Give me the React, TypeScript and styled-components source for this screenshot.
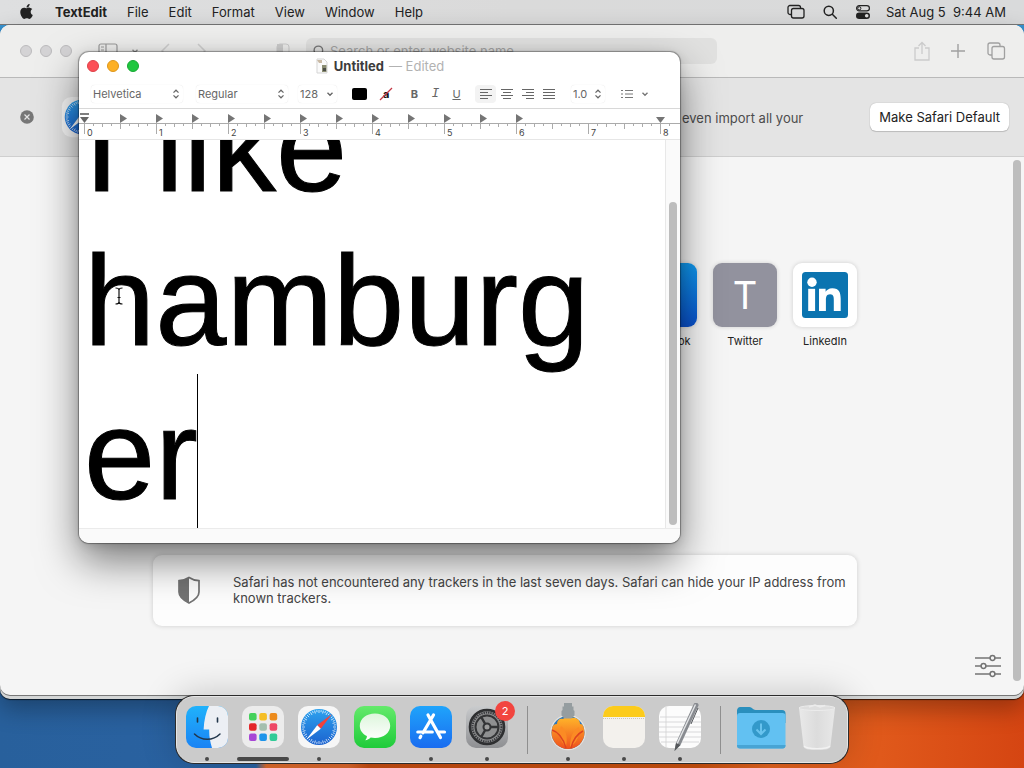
import React from "react";
import styled, { createGlobalStyle } from "styled-components";
import { FaApple } from "react-icons/fa";

const GlobalStyle = createGlobalStyle`
  *, *::before, *::after { box-sizing: border-box; }
  body {
    margin: 0;
    font-family: Inter, "Liberation Sans", sans-serif;
    font-size: 13px;
    line-height: 16px;
    color: #222;
  }
  button, input, select, textarea { font: inherit; color: inherit; }
  svg { display: block; flex: none; }
`;

/* ---------- Desktop ---------- */

const Desktop = styled.div`
  position: relative;
  min-height: 100vh;
  overflow: hidden;
  background:
    linear-gradient(180deg, #45a4e2 0, #1d6fae 80px, transparent 120px),
    linear-gradient(90deg, #28609c 0, #2a62a2 25%, #dd6a2c 26%, #d9662c 34%, #c44c12 36%, #c8500f 68%, #e2631f 75%, #e0591b 86%, #d54512 100%);
`;

const MenuBar = styled.header`
  display: flex;
  align-items: center;
  justify-content: space-between;
  height: 25px;
  padding: 0 18px 1px 18px;
  background: linear-gradient(90deg, #dedfe0, #dadada 50%, #d9dadb);
  border-bottom: 1px solid #777;
`;

const MenuGroup = styled.nav<{ $gap: number }>`
  display: flex;
  align-items: center;
  gap: ${(p) => p.$gap}px;
`;

const MenuItem = styled.button<{ $bold?: boolean }>`
  padding: 0;
  border: 0;
  background: none;
  white-space: pre;
  font-weight: ${(p) => (p.$bold ? 700 : 400)};
`;

const IconButton = styled.button<{ $color?: string }>`
  display: flex;
  align-items: center;
  justify-content: center;
  padding: 0;
  border: 0;
  background: none;
  color: ${(p) => p.$color ?? "#222"};
`;

/* ---------- Safari ---------- */

const BackWindow = styled.div`
  position: absolute;
  inset: 25px 0 69px 0;
  border-radius: 10px;
  background: #d3d5d5;
  box-shadow: 0 1px 1px rgba(0, 0, 0, 0.7), 0 10px 24px rgba(0, 0, 0, 0.3);
`;

const SafariWindow = styled.section`
  position: absolute;
  inset: 25px 0 73px 0;
  display: flex;
  flex-direction: column;
  overflow: hidden;
  border-radius: 10px;
  background: #f5f5f5;
  box-shadow: 0 1px 0 #777;
`;

const SafariToolbar = styled.div`
  display: flex;
  align-items: center;
  height: 53px;
  padding: 0 18px 0 20px;
  background: #eeeeed;
  border-bottom: 1px solid #b9b9b9;
`;

const Lights = styled.div`
  display: flex;
  gap: 8px;
`;

const Light = styled.button<{ $fill: string; $edge: string }>`
  width: 12px;
  height: 12px;
  padding: 0;
  border: 1px solid ${(p) => p.$edge};
  border-radius: 50%;
  background: ${(p) => p.$fill};
`;

const NavIcons = styled.div`
  display: flex;
  align-items: center;
  flex: none;
  width: 204px;
  padding-left: 26px;
  gap: 13px;
`;

const SearchField = styled.label`
  display: flex;
  align-items: center;
  flex: 1;
  gap: 4px;
  height: 26px;
  margin: 0 197px 0 16px;
  padding: 0 7px;
  border-radius: 6px;
  background: #e1e1e0;
  color: #777;
`;

const SearchInput = styled.input`
  flex: 1;
  min-width: 0;
  padding: 0;
  border: 0;
  background: none;
  outline: none;
  &::placeholder { color: #a3a3a3; opacity: 1; }
`;

const ToolbarRight = styled.div`
  display: flex;
  align-items: center;
  gap: 20px;
`;

const Banner = styled.div`
  display: flex;
  align-items: center;
  height: 79px;
  padding: 0 15px 0 20px;
  background: #e4e4e4;
  border-bottom: 1px solid #cfcfcf;
`;

const BannerIcon = styled.div`
  margin-left: 25px;
`;

const BannerText = styled.p`
  flex: 1;
  margin: 0 67px 0 0;
  padding-top: 2px;
  text-align: right;
  color: #4c4c4c;
`;

const DefaultButton = styled.button`
  height: 28px;
  padding: 0 9px;
  border: 0;
  border-radius: 6px;
  background: #fff;
  box-shadow: 0 0 1px rgba(0, 0, 0, 0.35), 0 1px 1px rgba(0, 0, 0, 0.15);
`;

const StartPage = styled.div`
  flex: 1;
  display: flex;
  justify-content: space-between;
  gap: 3px;
  padding: 3px 3px 14px 0;
`;

const StartScroll = styled.main`
  flex: 1;
  display: flex;
  flex-direction: column;
  align-items: center;
  justify-content: space-between;
  padding: 103px 0 0 0;
`;

const StartColumn = styled.div`
  width: 70%;
  max-width: 704px;
  min-width: 600px;
`;

const Favorites = styled.div`
  display: flex;
  justify-content: flex-end;
  gap: 16px;
`;

const Favorite = styled.a`
  display: flex;
  flex-direction: column;
  align-items: center;
  gap: 6px;
  width: 64px;
  font-size: 11px;
  color: #222;
  text-decoration: none;
`;

const Tile = styled.span<{ $bg: string }>`
  display: flex;
  align-items: center;
  justify-content: center;
  width: 64px;
  height: 64px;
  border-radius: 9px;
  background: ${(p) => p.$bg};
  color: #fff;
  font-size: 38px;
  line-height: 64px;
  font-weight: 400;
  box-shadow: 0 0 4px rgba(0, 0, 0, 0.16);
`;

const PrivacyCard = styled.div`
  display: flex;
  align-items: center;
  gap: 30px;
  min-height: 71px;
  margin-top: 206px;
  padding: 0 4px 2px 22px;
  border-radius: 9px;
  background: #fdfdfd;
  box-shadow: 0 0 5px rgba(0, 0, 0, 0.16);
  color: #444;
`;

const PrivacyText = styled.p`
  margin: 0;
`;

const SettingsRow = styled.div`
  align-self: flex-end;
  padding: 0 9px 3px 0;
`;

const ScrollThumb = styled.div<{ $h?: number }>`
  width: 8px;
  border-radius: 4px;
  background: #bdbdbd;
  height: ${(p) => (p.$h ? `${p.$h}%` : "auto")};
`;

/* ---------- TextEdit ---------- */

const EditorWindow = styled.section`
  position: absolute;
  top: 52px;
  left: 79px;
  width: 601px;
  height: 491px;
  display: flex;
  flex-direction: column;
  overflow: hidden;
  border-radius: 10px;
  background: #fff;
  box-shadow: 0 0 1px 1px rgba(0, 0, 0, 0.34), 0 18px 40px rgba(0, 0, 0, 0.5), 0 2px 12px rgba(0, 0, 0, 0.12);
`;

const TitleBar = styled.div`
  display: grid;
  grid-template-columns: 1fr auto 1fr;
  align-items: center;
  height: 28px;
  padding: 0 8px;
`;

const Title = styled.h1`
  display: flex;
  align-items: center;
  gap: 5px;
  margin: 0;
  font-size: 13px;
  font-weight: 700;
  color: #3c3c3c;
`;

const Edited = styled.span`
  font-weight: 400;
  color: #b2b2b2;
`;

const FormatBar = styled.div`
  display: flex;
  align-items: center;
  height: 29px;
  padding: 0 12px 1px 12px;
  border-bottom: 1px solid #d8d8d8;
  font-size: 11px;
  color: #666;
`;

const SelectBox = styled.label<{ $width: number; $gap: number }>`
  display: flex;
  align-items: center;
  width: ${(p) => p.$width}px;
  height: 18px;
  margin-right: ${(p) => p.$gap}px;
  padding: 0 3px 0 2px;
  border-radius: 4px;
  box-shadow: 0 0 1px rgba(0, 0, 0, 0.15);
`;

const Select = styled.select`
  flex: 1;
  min-width: 0;
  padding: 0;
  border: 0;
  appearance: none;
  background: none;
  outline: none;
`;

const Swatch = styled.button`
  width: 15px;
  height: 12px;
  margin-right: 12px;
  padding: 0;
  border: 0;
  border-radius: 2px;
  background: #000;
`;

const FormatGroup = styled.div<{ $right: number }>`
  display: flex;
  align-items: center;
  margin-right: ${(p) => p.$right}px;
`;

const FormatButton = styled.button<{ $active?: boolean; $kind?: "b" | "i" | "u" }>`
  display: flex;
  align-items: center;
  justify-content: center;
  width: 21px;
  height: 18px;
  padding: 0;
  border: 0;
  border-radius: 4px;
  background: ${(p) => (p.$active ? "#f3f3f3" : "none")};
  font-weight: ${(p) => (p.$kind === "b" ? 700 : 400)};
  font-style: ${(p) => (p.$kind === "i" ? "italic" : "normal")};
  font-family: ${(p) => (p.$kind === "i" ? '"Liberation Mono", monospace' : "inherit")};
  font-size: ${(p) => (p.$kind === "i" ? 13 : 11)}px;
  text-decoration: ${(p) => (p.$kind === "u" ? "underline" : "none")};
`;

const Ruler = styled.svg`
  width: 100%;
  height: 31px;
  border-bottom: 1px solid #e6e6e6;
  font-size: 9px;
`;

const EditorBody = styled.div`
  flex: 1;
  display: flex;
  min-height: 0;
`;

const Page = styled.div`
  position: relative;
  flex: 1;
  display: flex;
  align-items: flex-end;
  overflow: hidden;
`;

const Document = styled.textarea`
  display: block;
  flex: 1;
  margin: 0 0 -4px;
  padding: 0 10px 0 5px;
  border: 0;
  outline: none;
  resize: none;
  overflow: hidden;
  background: none;
  font-family: "Liberation Sans", Arial, sans-serif;
  font-size: 128px;
  line-height: 154px;
  color: #000;
  -webkit-text-stroke: 1px #000;
`;

const Caret = styled.span`
  position: absolute;
  left: 118px;
  bottom: 0;
  width: 1px;
  height: 154px;
  background: #000;
`;

const ScrollTrack = styled.div`
  display: flex;
  align-items: flex-end;
  justify-content: center;
  width: 15px;
  padding-bottom: 3px;
  border-left: 1px solid #e8e8e8;
  background: #fafafa;
`;

const EditorFooter = styled.div`
  height: 15px;
  border-top: 1px solid #ebebeb;
  background: #fafafa;
`;

const Pointer = styled.svg`
  position: absolute;
  left: 114px;
  top: 287px;
`;

/* ---------- Dock ---------- */

const DockBar = styled.nav`
  position: absolute;
  bottom: 5px;
  left: 50%;
  transform: translateX(-50%);
  display: flex;
  align-items: center;
  height: 67px;
  padding: 0 2px;
  border: 1px solid #e6e6e6;
  border-radius: 18px;
  background: #cbcbcb;
  box-shadow: 0 0 0 1px #2c2c2c, 0 -2px 36px rgba(0, 0, 0, 0.2);
`;

const DockItem = styled.button`
  position: relative;
  display: flex;
  flex-direction: column;
  align-items: center;
  width: 56px;
  height: 65px;
  padding: 6px 0 0;
  border: 0;
  background: none;
`;

const Dot = styled.span<{ $wide?: boolean }>`
  width: ${(p) => (p.$wide ? 52 : 4)}px;
  height: 4px;
  margin-top: 6px;
  border-radius: 2px;
  background: #484848;
`;

const Badge = styled.span`
  position: absolute;
  top: 4px;
  right: 0;
  width: 20px;
  height: 20px;
  border-radius: 50%;
  background: #f2453f;
  color: #fff;
  font-size: 11px;
  line-height: 20px;
`;

const DockSeparator = styled.span`
  width: 1px;
  height: 48px;
  margin: 0 12px;
  background: #8f8f8f;
`;

/* ---------- Drawings ---------- */

const UpDown = () => (
  <svg width="8" height="10" viewBox="0 0 8 10" fill="none" stroke="currentColor" strokeWidth="1.2">
    <path d="M1.5 3.6 4 1.2l2.5 2.4M1.5 6.4 4 8.8l2.5-2.4" />
  </svg>
);

const Chevron = () => (
  <svg width="8" height="8" viewBox="0 0 8 8" fill="none" stroke="currentColor" strokeWidth="1.4">
    <path d="M1.5 2.8 4 5.2l2.5-2.4" />
  </svg>
);

const Magnifier = ({ size = 14 }: { size?: number }) => (
  <svg width={size} height={size} viewBox="0 0 14 14" fill="none" stroke="currentColor" strokeWidth="1.5" strokeLinecap="round">
    <circle cx="5.8" cy="5.8" r="4.6" />
    <path d="m9.3 9.3 4 4" />
  </svg>
);

const AlignIcon = ({ rows }: { rows: [number, number][] }) => (
  <svg width="12" height="10" viewBox="0 0 12 10" stroke="currentColor" strokeWidth="1">
    {rows.map(([a, b], i) => (
      <path key={i} d={`M${a} ${i * 3 + 0.5}H${b}`} />
    ))}
  </svg>
);

const LinkedInMark = () => (
  <svg width="46" height="46" viewBox="0 0 46 46">
    <rect width="46" height="46" rx="3.500" fill="#0b74b0" />
    <g fill="#fff">
      <circle cx="10" cy="10.200" r="4.700" />
      <path d="M6.200 16.800h6.900V39H6.200z" />
      <path d="M17 16.800h6.600v3c1-1.800 3.200-3.600 6.700-3.600 7 0 8.400 4.600 8.400 10.600V39h-6.900V28.200c0-2.700 0-6-3.700-6s-4.200 2.900-4.200 5.900V39H17z" />
    </g>
  </svg>
);

const compassTicks = Array.from({ length: 48 }, (_, i) => i * 7.5);

const Compass = ({ size = 48 }: { size?: number }) => (
  <svg width={size} height={size} viewBox="0 0 48 48">
    <defs>
      <linearGradient id="compass" x1="0" y1="0" x2="0" y2="1">
        <stop offset="0" stopColor="#2da2ee" />
        <stop offset="1" stopColor="#1b62cf" />
      </linearGradient>
    </defs>
    <rect x="3" y="3" width="42" height="42" rx="10" fill="#f6f6f6" />
    <circle cx="24" cy="24" r="18" fill="url(#compass)" />
    {compassTicks.map((a, i) => (
      <path key={a} d={i % 2 ? "M24 7v2" : "M24 7v3"} stroke="#fff" strokeWidth=".7" transform={`rotate(${a} 24 24)`} />
    ))}
    <path d="M37 11 22.2 22.2l3.6 3.6z" fill="#f2413b" />
    <path d="M11 37 22.2 22.2l3.6 3.6z" fill="#fff" />
  </svg>
);

const Finder = () => (
  <svg width="48" height="48" viewBox="0 0 48 48">
    <defs>
      <linearGradient id="finder" x1="0" y1="0" x2="0" y2="1">
        <stop offset="0" stopColor="#20b2fb" />
        <stop offset="1" stopColor="#1a83f4" />
      </linearGradient>
      <clipPath id="finderClip"><rect x="3" y="3" width="42" height="42" rx="10" /></clipPath>
    </defs>
    <g clipPath="url(#finderClip)">
      <rect x="3" y="3" width="42" height="42" fill="url(#finder)" />
      <path d="M26 3c-3 6-5 14-5.400 23.500h5.600c-.2 6 .8 12 2.800 18.500h17V3z" fill="#eceff4" />
    </g>
    <path d="M14.500 15v4M34.500 15v4" stroke="#22364b" strokeWidth="1.600" strokeLinecap="round" />
    <path d="M11.500 31c7 7 18.500 7 25.500 0" fill="none" stroke="#22364b" strokeWidth="1.500" strokeLinecap="round" />
  </svg>
);

const padColors = ["#45d15b", "#f5be25", "#ec8b1c", "#e3262a", "#a3bfae", "#ee4766", "#a746d6", "#1d94ea", "#31cb97"];

const Launchpad = () => (
  <svg width="48" height="48" viewBox="0 0 48 48">
    <rect x="3" y="3" width="42" height="42" rx="10" fill="#ececec" />
    {padColors.map((c, i) => (
      <rect key={c} x={10 + (i % 3) * 10.300} y={10 + Math.floor(i / 3) * 10.200} width="7.600" height="7.600" rx="2" fill={c} />
    ))}
  </svg>
);

const Messages = () => (
  <svg width="48" height="48" viewBox="0 0 48 48">
    <defs>
      <linearGradient id="msg" x1="0" y1="0" x2="0" y2="1">
        <stop offset="0" stopColor="#64ea6b" />
        <stop offset="1" stopColor="#1fcb3a" />
      </linearGradient>
      <linearGradient id="bubble" x1="0" y1="0" x2="0" y2="1">
        <stop offset="0" stopColor="#ddf6dc" />
        <stop offset="1" stopColor="#fff" />
      </linearGradient>
    </defs>
    <rect x="3" y="3" width="42" height="42" rx="10" fill="url(#msg)" />
    <path d="M24 10.500c8.700 0 15.200 5.400 15.200 12.200S32.700 35 24 35c-1.500 0-3-.2-4.300-.5-1.300 1.500-3.300 2.600-5.500 2.700 1.200-1.200 1.700-2.500 1.700-4.100-4.400-2.200-7.100-6-7.100-10.400 0-6.800 6.500-12.200 15.200-12.200z" fill="url(#bubble)" />
  </svg>
);

const AppStore = () => (
  <svg width="48" height="48" viewBox="0 0 48 48">
    <defs>
      <linearGradient id="store" x1="0" y1="0" x2="0" y2="1">
        <stop offset="0" stopColor="#1fa4fb" />
        <stop offset="1" stopColor="#1a6cf0" />
      </linearGradient>
    </defs>
    <rect x="3" y="3" width="42" height="42" rx="10" fill="url(#store)" />
    <g stroke="#fff" strokeWidth="3.200" strokeLinecap="round" fill="none">
      <path d="m21 12 12.500 22.500M26.500 12 16 29.800M13.800 33.200l-.8 1.500M10.800 29h14.500M31.500 29h6" />
    </g>
  </svg>
);

const Settings = () => (
  <svg width="48" height="48" viewBox="0 0 48 48">
    <defs>
      <linearGradient id="set" x1="0" y1="0" x2="0" y2="1">
        <stop offset="0" stopColor="#c9cbcd" />
        <stop offset="1" stopColor="#8e8f92" />
      </linearGradient>
    </defs>
    <rect x="3" y="3" width="42" height="42" rx="10" fill="url(#set)" />
    <circle cx="24" cy="24" r="17" fill="#8b8c8d" stroke="#2e2f31" strokeWidth="2.600" />
    <circle cx="24" cy="24" r="14.500" fill="none" stroke="#35363a" strokeWidth="2" strokeDasharray="1.300 1" />
    <circle cx="24" cy="24" r="11.500" fill="#8f9091" stroke="#333436" strokeWidth="2" />
    <circle cx="24" cy="24" r="3.500" fill="#9c9c9c" stroke="#333436" strokeWidth="2" />
    <path d="M27.500 24H36M22.200 21 18 13.700M22.200 27 18 34.300" stroke="#333436" strokeWidth="2.400" />
  </svg>
);

const Installer = () => (
  <svg width="48" height="48" viewBox="0 0 48 48">
    <defs>
      <clipPath id="orb"><circle cx="24" cy="29.500" r="16.500" /></clipPath>
      <linearGradient id="petal" x1="0" y1="0" x2="0" y2="1">
        <stop offset="0" stopColor="#ffb52a" />
        <stop offset="1" stopColor="#ee4a1c" />
      </linearGradient>
    </defs>
    <circle cx="24" cy="29.500" r="17.800" fill="#e6e4e0" />
    <g clipPath="url(#orb)">
      <rect x="6" y="12" width="36" height="36" fill="#2f78b8" />
      <path d="M6 27c2-4 4-6 7-6 0-4 3-6 6-5 2-2 6-2 9-1 5-1 8 2 8 6 3 0 5 2 6 6l-3 14-15 7-15-7z" fill="url(#petal)" />
      <path d="M22 44c-6-6-8-13-5-21 5 4 7 10 5 21zM26 44c7-4 10-12 9-20-6 3-9 10-9 20z" fill="#fb8b24" />
      <path d="M8 27c7 2 11 8 14 18M39 28c-6 3-10 9-12 17" stroke="#dd4420" strokeWidth="1.500" fill="none" />
    </g>
    <path d="M20 0h8v3.500h1.500v3.500l1 1v4.500l-3 3h-7l-3-3V8l1-1V3.500H20z" fill="#959da0" />
  </svg>
);

const Notes = () => (
  <svg width="48" height="48" viewBox="0 0 48 48">
    <defs><clipPath id="notes"><rect x="3" y="3" width="42" height="42" rx="10" /></clipPath></defs>
    <g clipPath="url(#notes)">
      <rect x="3" y="3" width="42" height="42" fill="#f3f1ed" />
      <rect x="3" y="3" width="42" height="11" fill="#fccb1b" />
      <path d="M3 15.500h42" stroke="#c9c5bb" strokeWidth="1" strokeDasharray="1 1" />
    </g>
  </svg>
);

const TextEditIcon = () => (
  <svg width="48" height="48" viewBox="0 0 48 48">
    <rect x="3" y="3" width="42" height="42" rx="10" fill="#fcfcfc" />
    <path d="M4 14h40M3 19h42M3 24h42M3 29h42M3 34h42M5 39h38" stroke="#cfcfd2" strokeWidth=".8" />
    <path d="M10 4v40" stroke="#d2d2d2" strokeWidth=".8" />
    <path d="M18.500 48 20 40 38 .5c1.500-1.500 5-.5 4.500 2L24.500 42z" fill="#888b90" />
    <path d="M21 41 39.500 1.500" stroke="#e3e5e7" strokeWidth="1.400" />
    <path d="m18.500 48 1.500-8 4.500 2z" fill="#55585c" />
    <path d="M42 5 35 21" stroke="#55585c" strokeWidth="1" />
  </svg>
);

const Folder = () => (
  <svg width="52" height="48" viewBox="0 0 52 48">
    <path d="M2 8c0-2 1-4 3.500-4h9c2.500 0 3.500 3 6 3H47c2.500 0 3.500 1.500 3.500 3.500V20H2z" fill="#2a8fbd" />
    <rect x="2" y="10" width="48.500" height="35.500" rx="3" fill="#62c1f2" />
    <path d="M2 42h48.500v.500a3 3 0 0 1-3 3H5a3 3 0 0 1-3-3z" fill="#48a4d4" />
    <circle cx="26" cy="26" r="9" fill="#3399ca" />
    <path d="M26 20.500v10M21.500 26.500l4.500 4.500 4.500-4.500" fill="none" stroke="#69c3ee" strokeWidth="2" />
  </svg>
);

const Trash = () => (
  <svg width="48" height="48" viewBox="0 0 48 48">
    <defs>
      <linearGradient id="trash" x1="0" y1="0" x2="1" y2="0">
        <stop offset="0" stopColor="#e9e9e9" />
        <stop offset=".5" stopColor="#dcdcdc" />
        <stop offset="1" stopColor="#e8e8e8" />
      </linearGradient>
    </defs>
    <path d="M6 5h36l-4.500 38c-.5 3-4 4-13.500 4s-13-1-13.500-4z" fill="url(#trash)" />
    <ellipse cx="24" cy="5" rx="18" ry="2.500" fill="#dedede" stroke="#ececec" />
    <path d="M16 4 22 2l5 2 5-1.500" stroke="#ececec" strokeWidth="1.500" fill="none" />
    <path d="M11 43c3 3.500 23 3.500 26 0" stroke="#f2f2f2" strokeWidth="1.200" fill="none" />
  </svg>
);

const tabStops = Array.from({ length: 12 }, (_, i) => 42 + i * 36);
const rulerTicks = Array.from({ length: 66 }, (_, i) => i);

const RulerDrawing = () => (
  <Ruler aria-label="Ruler">
    <path d="M0 14.500H2000" stroke="#ababab" />
    {rulerTicks.map((i) => (
      <path key={i} d={`M${5.5 + i * 9} 15v${i % 8 === 0 ? 10 : i % 4 === 0 ? 5 : i % 2 === 0 ? 3 : 2}`} stroke="#ababab" />
    ))}
    {Array.from({ length: 9 }, (_, i) => (
      <text key={i} x={8 + i * 72} y="27" fill="#444">{i}</text>
    ))}
    {tabStops.map((x) => (
      <path key={x} d={`M${x - 1} 5l7 4.500-7 4.500z`} fill="#757575" />
    ))}
    <path d="M1 5h9" stroke="#555" strokeWidth="1.500" />
    <path d="M1 8h9l-4.500 6z" fill="#666" />
    <path d="M577 8h9l-4.500 6z" fill="#757575" />
  </Ruler>
);

const menus = ["File", "Edit", "Format", "View", "Window", "Help"];

export default function App() {
  return (
    <>
      <GlobalStyle />
      <Desktop>
        <MenuBar>
          <MenuGroup $gap={20}>
            <IconButton aria-label="Apple menu"><FaApple size={17} /></IconButton>
            <MenuItem $bold>TextEdit</MenuItem>
            {menus.map((m) => <MenuItem key={m}>{m}</MenuItem>)}
          </MenuGroup>
          <MenuGroup $gap={15}>
            <MenuGroup $gap={18}>
              <IconButton aria-label="Stage Manager">
                <svg width="18" height="16" viewBox="0 0 18 16" fill="none" stroke="currentColor" strokeWidth="1.300">
                  <path d="M4.500 10.500H3a2 2 0 0 1-2-2V3.500a2 2 0 0 1 2-2h8.500a2 2 0 0 1 2 2v1" />
                  <rect x="4.500" y="4.500" width="12.500" height="9.500" rx="2" />
                </svg>
              </IconButton>
              <IconButton aria-label="Spotlight"><Magnifier /></IconButton>
              <IconButton aria-label="Control Center">
                <svg width="16" height="14" viewBox="0 0 16 14">
                  <rect x="1.600" y=".7" width="12.800" height="5.200" rx="2.600" fill="none" stroke="#222" strokeWidth="1.200" />
                  <circle cx="4.300" cy="3.300" r="1.600" fill="none" stroke="#222" />
                  <rect x="1" y="7.500" width="14" height="6.400" rx="3.200" fill="#222" />
                  <circle cx="11.700" cy="10.700" r="1.800" fill="#ddd" />
                </svg>
              </IconButton>
            </MenuGroup>
            <MenuItem>{"Sat Aug 5  9:44 AM"}</MenuItem>
          </MenuGroup>
        </MenuBar>

        <BackWindow />
        <SafariWindow aria-label="Safari">
          <SafariToolbar>
            <Lights>
              {["Close", "Minimize", "Zoom"].map((l) => <Light key={l} aria-label={l} $fill="#d4d3d5" $edge="#bcbbbd" />)}
            </Lights>
            <NavIcons>
              <IconButton aria-label="Sidebar" $color="#9a9a9a">
                <svg width="20" height="16" viewBox="0 0 20 16" fill="none" stroke="currentColor" strokeWidth="1.200">
                  <rect x="1" y="1" width="18" height="14" rx="2" />
                  <path d="M8 1v14M3 4h3M3 7h3M3 10h3" />
                </svg>
              </IconButton>
              <IconButton aria-label="Tab groups" $color="#8c8c8c"><Chevron /></IconButton>
              <IconButton aria-label="Back" $color="#cfcfcf">
                <svg width="24" height="16" viewBox="0 0 24 16" fill="none" stroke="currentColor" strokeWidth="1.500"><path d="m17 1-7 7 7 7" /></svg>
              </IconButton>
              <IconButton aria-label="Forward" $color="#cfcfcf">
                <svg width="24" height="16" viewBox="0 0 24 16" fill="none" stroke="currentColor" strokeWidth="1.500"><path d="m9 1 7 7-7 7" /></svg>
              </IconButton>
            </NavIcons>
            <IconButton aria-label="Privacy report" $color="#cdcdcd">
              <svg width="14" height="16" viewBox="0 0 14 16"><rect x="1" y="1" width="12" height="14" rx="3" fill="none" stroke="currentColor" /><path d="M7 1v14H4a3 3 0 0 1-3-3V1z" fill="currentColor" /></svg>
            </IconButton>
            <SearchField>
              <Magnifier size={13} />
              <SearchInput aria-label="Address" placeholder="Search or enter website name" />
            </SearchField>
            <ToolbarRight>
              <IconButton aria-label="Share" $color="#cbcbcb">
                <svg width="16" height="20" viewBox="0 0 16 20" fill="none" stroke="currentColor" strokeWidth="1.300">
                  <path d="M5 7H1v12h14V7h-4M8 13V1.500M4.500 5 8 1.500 11.500 5" />
                </svg>
              </IconButton>
              <IconButton aria-label="New tab" $color="#a0a0a0">
                <svg width="16" height="16" viewBox="0 0 16 16" stroke="currentColor" strokeWidth="1.400"><path d="M8 1v14M1 8h14" /></svg>
              </IconButton>
              <IconButton aria-label="Tab overview" $color="#a0a0a0">
                <svg width="20" height="18" viewBox="0 0 20 18" fill="none" stroke="currentColor" strokeWidth="1.300">
                  <path d="M6 13H4a2 2 0 0 1-2-2V3a2 2 0 0 1 2-2h8a2 2 0 0 1 2 2v1.500" />
                  <rect x="6" y="4.500" width="12.500" height="12.500" rx="2" />
                </svg>
              </IconButton>
            </ToolbarRight>
          </SafariToolbar>

          <Banner>
            <IconButton aria-label="Dismiss">
              <svg width="14" height="14" viewBox="0 0 14 14"><circle cx="7" cy="7" r="6.800" fill="#777" /><path d="m4.500 4.500 5 5m0-5-5 5" stroke="#e4e4e4" strokeWidth="1.200" /></svg>
            </IconButton>
            <BannerIcon><Compass size={46} /></BannerIcon>
            <BannerText>even import all your</BannerText>
            <DefaultButton>Make Safari Default</DefaultButton>
          </Banner>

          <StartPage>
            <StartScroll>
              <StartColumn>
                <Favorites>
                  <Favorite href="#facebook"><Tile $bg="linear-gradient(#109af0, #0a50cc)" />Facebook</Favorite>
                  <Favorite href="#twitter"><Tile $bg="#92929e">T</Tile>Twitter</Favorite>
                  <Favorite href="#linkedin"><Tile $bg="#fff"><LinkedInMark /></Tile>LinkedIn</Favorite>
                </Favorites>
                <PrivacyCard>
                  <svg width="28" height="30" viewBox="0 0 28 30">
                    <path d="M14 2.500c3 2 6.500 3 10 3.200V17c0 5-4 8-10 11C8 25 4 22 4 17V5.700c3.500-.2 7-1.200 10-3.200z" fill="none" stroke="#737373" strokeWidth="1.700" />
                    <path d="M14 2.500V28C8 25 4 22 4 17V5.700c3.500-.2 7-1.200 10-3.200z" fill="#737373" />
                  </svg>
                  <PrivacyText>
                    Safari has not encountered any trackers in the last seven days. Safari can hide your IP address from known trackers.
                  </PrivacyText>
                </PrivacyCard>
              </StartColumn>
              <SettingsRow>
                <IconButton aria-label="Customize start page" $color="#747474">
                  <svg width="26" height="24" viewBox="0 0 26 24" fill="none" stroke="currentColor" strokeWidth="1.500">
                    <path d="M0 4h15M20 4h6M0 12h6M11 12h15M0 20h15M20 20h6" />
                    <circle cx="17.500" cy="4" r="2.400" /><circle cx="8.500" cy="12" r="2.400" /><circle cx="17.500" cy="20" r="2.400" />
                  </svg>
                </IconButton>
              </SettingsRow>
            </StartScroll>
            <ScrollThumb />
          </StartPage>
        </SafariWindow>

        <EditorWindow aria-label="TextEdit">
          <TitleBar>
            <Lights>
              <Light aria-label="Close" $fill="#fc4f57" $edge="#dd4249" />
              <Light aria-label="Minimize" $fill="#fdb024" $edge="#dd961c" />
              <Light aria-label="Zoom" $fill="#1fc73f" $edge="#18a834" />
            </Lights>
            <Title>
              <svg width="14" height="16" viewBox="0 0 14 16">
                <path d="M2 1h7l3 3v11H2z" fill="#fafafa" stroke="#d5d5d5" />
                <path d="M2 2h5v3H4z" fill="#c9b9a4" />
                <path d="M7 7h4.500v7H7z" fill="#8b8d72" /><path d="M8 10h3v3H8z" fill="#4a4d45" />
              </svg>
              Untitled <Edited>— Edited</Edited>
            </Title>
          </TitleBar>
          <FormatBar>
            <SelectBox $width={92} $gap={13}>
              <Select aria-label="Font family"><option>Helvetica</option></Select><UpDown />
            </SelectBox>
            <SelectBox $width={92} $gap={10}>
              <Select aria-label="Font style"><option>Regular</option></Select><UpDown />
            </SelectBox>
            <SelectBox $width={39} $gap={15}>
              <Select aria-label="Font size"><option>128</option></Select><Chevron />
            </SelectBox>
            <Swatch aria-label="Text color" />
            <FormatGroup $right={11}>
              <IconButton aria-label="Highlight color">
                <svg width="14" height="14" viewBox="0 0 14 14">
                  <text x="4" y="11" fontSize="11" fontWeight="700" fill="#111">a</text>
                  <path d="m1 13 12-12" stroke="#c33845" strokeWidth="1.200" />
                </svg>
              </IconButton>
            </FormatGroup>
            <FormatGroup $right={8}>
              <FormatButton $kind="b">B</FormatButton>
              <FormatButton $kind="i">I</FormatButton>
              <FormatButton $kind="u">U</FormatButton>
            </FormatGroup>
            <FormatGroup $right={12}>
              <FormatButton $active aria-label="Align left"><AlignIcon rows={[[0, 12], [0, 8], [0, 12], [0, 8]]} /></FormatButton>
              <FormatButton aria-label="Align center"><AlignIcon rows={[[0, 12], [2, 10], [0, 12], [2, 10]]} /></FormatButton>
              <FormatButton aria-label="Align right"><AlignIcon rows={[[0, 12], [4, 12], [0, 12], [4, 12]]} /></FormatButton>
              <FormatButton aria-label="Justify"><AlignIcon rows={[[0, 12], [0, 12], [0, 12], [0, 12]]} /></FormatButton>
            </FormatGroup>
            <SelectBox $width={34} $gap={16}>
              <Select aria-label="Line spacing"><option>1.0</option></Select><UpDown />
            </SelectBox>
            <FormatGroup $right={0}>
              <IconButton aria-label="Lists" $color="#777">
                <svg width="32" height="10" viewBox="0 0 32 10" fill="none" stroke="currentColor">
                  <path d="M0 1.500h2M4 1.500h8M0 5h2M4 5h8M0 8.500h2M4 8.500h8" />
                  <path d="m21.500 3.800 2.500 2.400 2.500-2.400" strokeWidth="1.400" />
                </svg>
              </IconButton>
            </FormatGroup>
          </FormatBar>
          <RulerDrawing />
          <EditorBody>
            <Page>
              <Document rows={3} spellCheck={false} aria-label="Document text" defaultValue="I like hamburger" />
              <Caret />
            </Page>
            <ScrollTrack><ScrollThumb $h={84} /></ScrollTrack>
          </EditorBody>
          <EditorFooter />
        </EditorWindow>

        <DockBar aria-label="Dock">
          <DockItem aria-label="Finder"><Finder /><Dot /></DockItem>
          <DockItem aria-label="Launchpad"><Launchpad /><Dot $wide /></DockItem>
          <DockItem aria-label="Safari"><Compass /><Dot /></DockItem>
          <DockItem aria-label="Messages"><Messages /></DockItem>
          <DockItem aria-label="App Store"><AppStore /><Dot /></DockItem>
          <DockItem aria-label="System Settings"><Settings /><Badge>2</Badge><Dot /></DockItem>
          <DockSeparator />
          <DockItem aria-label="Installer"><Installer /><Dot /></DockItem>
          <DockItem aria-label="Notes"><Notes /><Dot /></DockItem>
          <DockItem aria-label="TextEdit"><TextEditIcon /><Dot /></DockItem>
          <DockSeparator />
          <DockItem aria-label="Downloads"><Folder /></DockItem>
          <DockItem aria-label="Trash"><Trash /></DockItem>
        </DockBar>

        <Pointer width="10" height="18" viewBox="0 0 10 18" fill="none" stroke="#111" strokeWidth="1.200">
          <path d="M1.500 1C3.500 1 5 1.500 5 3c0-1.500 1.500-2 3.500-2M5 3v12M3.500 10.500h3M1.500 17C3.500 17 5 16.500 5 15c0 1.500 1.500 2 3.500 2" />
        </Pointer>
      </Desktop>
    </>
  );
}
